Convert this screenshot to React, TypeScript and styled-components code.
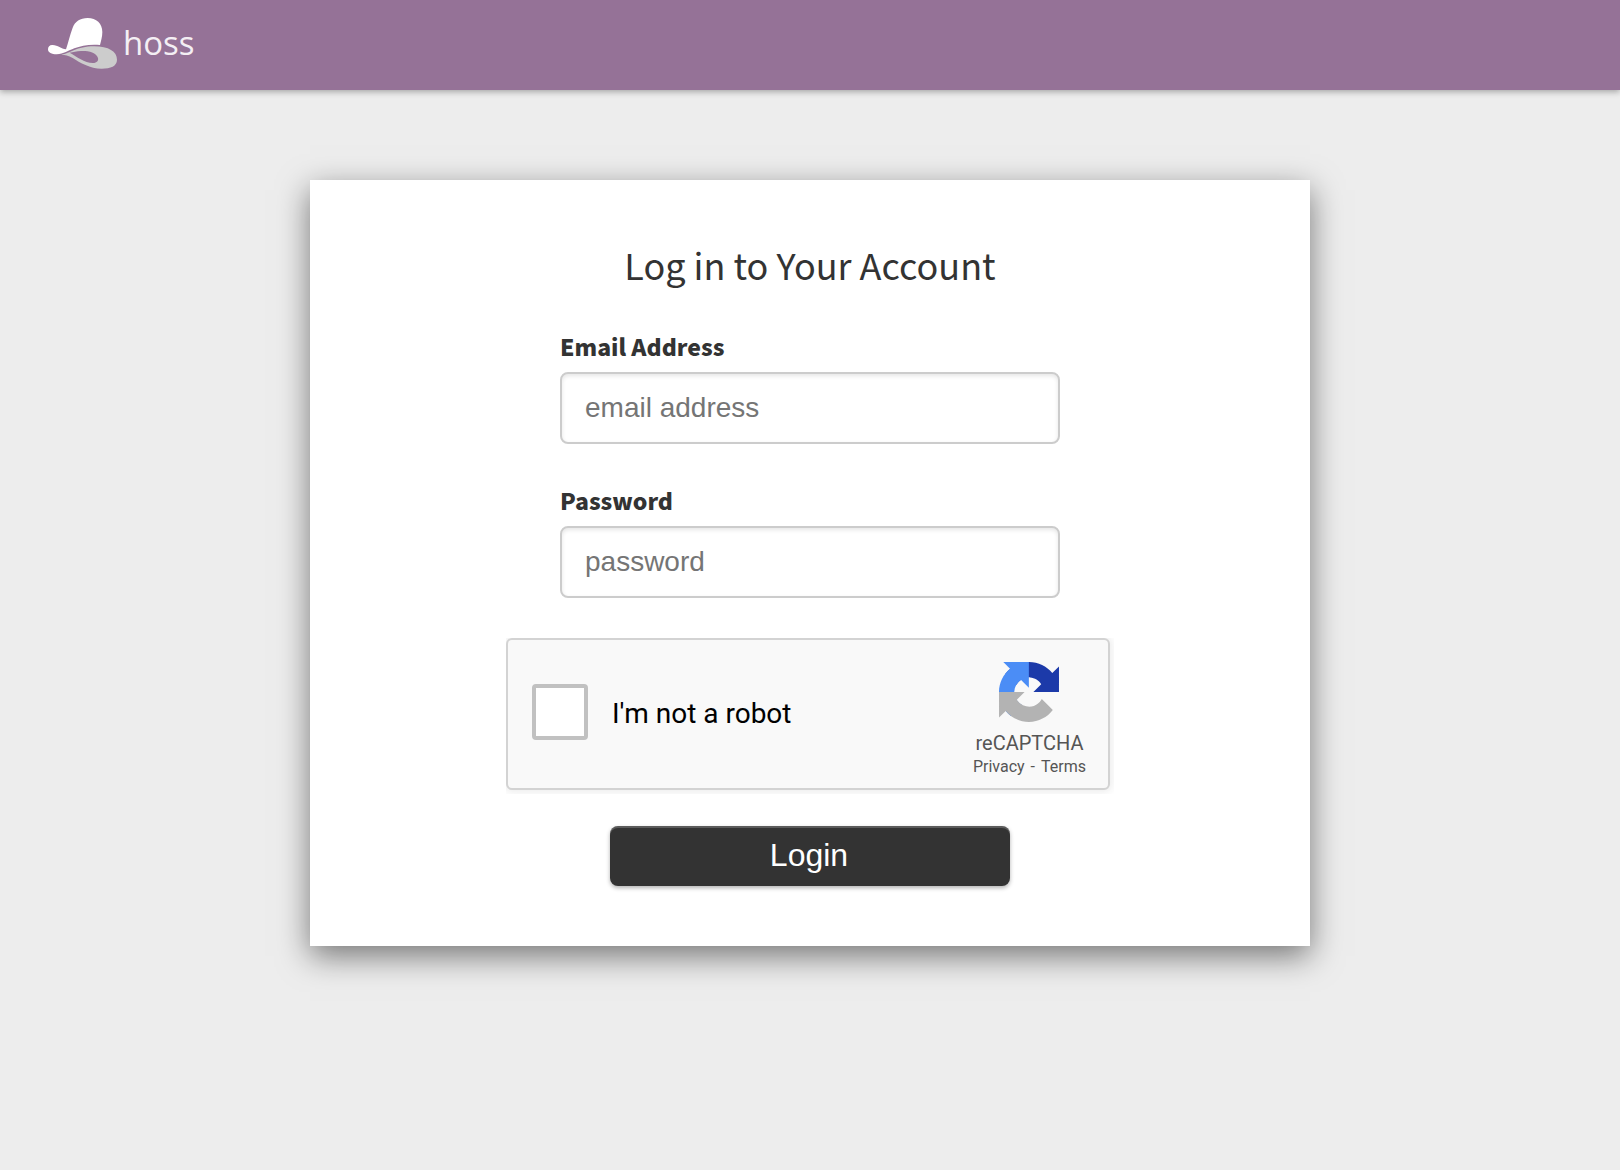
import React from "react";
import styled, { createGlobalStyle } from "styled-components";

const GlobalStyle = createGlobalStyle`
  *, *::before, *::after { box-sizing: border-box; }
  body {
    margin: 0;
    background: #ededed;
    color: #333;
    font-family: "Noto Sans CJK SC", "Open Sans", sans-serif;
  }
`;

const Header = styled.header`
  display: flex;
  align-items: center;
  height: 90px;
  padding: 0 48px 4px;
  background: #957297;
  box-shadow: 0 2px 6px rgba(0, 0, 0, 0.3);
`;

const Brand = styled.a`
  display: flex;
  align-items: center;
  gap: 6px;
  color: #f4eff4;
  font: 400 33px/52px "Open Sans", sans-serif;
  text-decoration: none;
`;

const Main = styled.main`
  display: flex;
  justify-content: center;
  padding: 90px 24px;
`;

const Card = styled.form`
  display: flex;
  flex-direction: column;
  align-items: center;
  width: 100%;
  max-width: 1000px;
  padding: 60px 24px;
  background: #fff;
  box-shadow: 0 10px 30px rgba(0, 0, 0, 0.5);
`;

const Title = styled.h1`
  margin: 0 0 40px;
  font-size: 36px;
  font-weight: 400;
  line-height: 48px;
`;

const Fields = styled.div`
  display: grid;
  gap: 38px;
  width: 100%;
  max-width: 500px;
  margin-bottom: 40px;
`;

const Field = styled.div`
  display: grid;
  gap: 8px;
`;

const FieldLabel = styled.label`
  font-size: 23px;
  font-weight: 900;
  line-height: 36px;
`;

const TextInput = styled.input`
  width: 100%;
  height: 72px;
  padding: 0 23px;
  border: 2px solid #ccc;
  border-radius: 8px;
  background: #fff;
  box-shadow: inset 0 2px 4px rgba(0, 0, 0, 0.1);
  color: #333;
  font: 28px "Liberation Sans", Arial, sans-serif;

  &::placeholder { color: #757575; opacity: 1; }
`;

const CaptchaFrame = styled.div`
  width: 100%;
  max-width: 608px;
  margin-bottom: 32px;
  padding: 0 4px 4px 0;
  overflow: hidden;
`;

const Captcha = styled.div`
  display: flex;
  align-items: center;
  justify-content: space-between;
  height: 152px;
  padding: 0 22px 0 24px;
  border: 2px solid #d3d3d3;
  border-radius: 6px;
  background: #f9f9f9;
  box-shadow: 0 0 8px 2px rgba(0, 0, 0, 0.08);
  font-family: Roboto, sans-serif;
`;

const RobotCheck = styled.label`
  display: flex;
  align-items: center;
  gap: 24px;
  color: #000;
  font-size: 28px;
  line-height: 34px;
`;

const CheckBox = styled.input`
  appearance: none;
  width: 56px;
  height: 56px;
  margin: 0 0 4px;
  border: 4px solid #c1c1c1;
  border-radius: 4px;
  background: #fff;
`;

const CaptchaBrand = styled.div`
  display: flex;
  flex-direction: column;
  align-items: center;
  padding-top: 12px;
  color: #555;
`;

const CaptchaName = styled.div`
  margin-top: 8px;
  font-size: 20px;
  line-height: 26px;
`;

const CaptchaLinks = styled.div`
  display: flex;
  gap: 6px;
  font-size: 16px;
  line-height: 22px;

  a { color: inherit; text-decoration: none; }
`;

const LoginButton = styled.button`
  width: 100%;
  max-width: 400px;
  height: 60px;
  padding: 0 2px 2px 0;
  border: 0;
  border-radius: 8px;
  background: #333;
  box-shadow: inset 0 2px 0 rgba(255, 255, 255, 0.2), 0 2px 4px rgba(0, 0, 0, 0.3);
  color: #fff;
  font: 32px "Liberation Sans", Arial, sans-serif;
`;

const HatLogo = () => (
  <svg width="69" height="51" viewBox="54 53 207 153" aria-hidden="true">
    <path
      fill="#fff"
      d="M108 147C114 128 120 104 128 82C135 64 150 53 173 53C199 53 217 69 217 95C217 109 213 122 210 134C180 131 153 136 133 144C115 151 101 161 80 162C65 162 54 157 54 147C54 138 60 133 68 134C84 135 93 145 108 147Z"
    />
    <path
      fill="#ccc"
      fillRule="evenodd"
      d="M94 163C120 160 140 138 192 138C236 138 261 154 261 178C261 197 242 205 215 205C180 205 150 187 128 173C115 165 105 163 94 163ZM119 157C140 168 163 188 189 188C201 188 206 181 204 173C199 156 174 151 153 152C139 153 130 155 119 157Z"
    />
  </svg>
);

const CaptchaLogo = () => (
  <svg width="60" height="60" viewBox="0 0 64 64" aria-hidden="true">
    <path fill="#1c3aa9" d="M64 31.955l-.033-1.37V4.687l-7.16 7.16C50.948 4.674 42.033.093 32.05.093c-10.4 0-19.622 4.96-25.458 12.64l11.736 11.86a15.55 15.55 0 0 1 4.754-5.334c2.05-1.6 4.952-2.906 8.968-2.906.485 0 .86.057 1.135.163 4.976.393 9.288 3.14 11.828 7.124l-8.307 8.307L64 31.953" />
    <path fill="#4b8df6" d="M31.862.094l-1.37.033H4.594l7.16 7.16C4.58 13.147 0 22.06 0 32.046c0 10.4 4.96 19.622 12.64 25.458L24.5 45.768a15.55 15.55 0 0 1-5.334-4.754c-1.6-2.05-2.906-4.952-2.906-8.968 0-.485.057-.86.163-1.135.393-4.976 3.14-9.288 7.124-11.828l8.307 8.307L31.86.095" />
    <path fill="#b3b3b3" d="M.001 32.045l.033 1.37v25.898l7.16-7.16c5.86 7.173 14.774 11.754 24.76 11.754 10.4 0 19.622-4.96 25.458-12.64l-11.736-11.86a15.55 15.55 0 0 1-4.754 5.334c-2.05 1.6-4.952 2.906-8.968 2.906-.485 0-.86-.057-1.135-.163-4.976-.393-9.288-3.14-11.828-7.124l8.307-8.307c-10.522.04-22.4.066-27.295-.005" />
  </svg>
);

export default function App() {
  return (
    <>
      <GlobalStyle />
      <Header>
        <Brand href="#">
          <HatLogo />
          <span>hoss</span>
        </Brand>
      </Header>
      <Main>
        <Card onSubmit={(event: React.FormEvent) => event.preventDefault()}>
          <Title>Log in to Your Account</Title>
          <Fields>
            <Field>
              <FieldLabel htmlFor="email">Email Address</FieldLabel>
              <TextInput id="email" type="email" placeholder="email address" />
            </Field>
            <Field>
              <FieldLabel htmlFor="password">Password</FieldLabel>
              <TextInput id="password" type="password" placeholder="password" />
            </Field>
          </Fields>
          <CaptchaFrame>
            <Captcha>
              <RobotCheck>
                <CheckBox type="checkbox" />
                <span>I'm not a robot</span>
              </RobotCheck>
              <CaptchaBrand>
                <CaptchaLogo />
                <CaptchaName>reCAPTCHA</CaptchaName>
                <CaptchaLinks>
                  <a href="#privacy">Privacy</a>
                  <span>-</span>
                  <a href="#terms">Terms</a>
                </CaptchaLinks>
              </CaptchaBrand>
            </Captcha>
          </CaptchaFrame>
          <LoginButton type="submit">Login</LoginButton>
        </Card>
      </Main>
    </>
  );
}
